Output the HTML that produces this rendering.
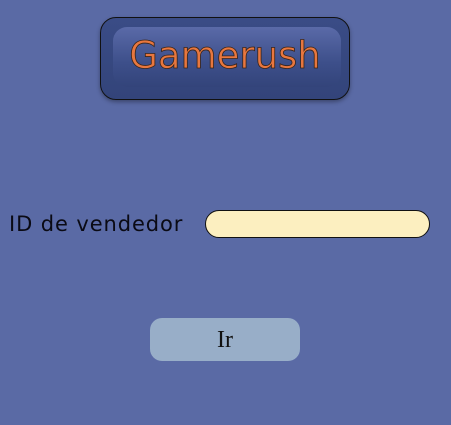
<!DOCTYPE html>
<html><head><meta charset="utf-8"><style>
body{margin:0;width:451px;height:425px;background:#5a6aa5;position:relative;overflow:hidden;font-family:"Liberation Sans",sans-serif}
.logo{position:absolute;left:100px;top:17px;width:248px;height:81px;border:1px solid #111;border-radius:16px;background:linear-gradient(#3a4c86,#33447a);box-shadow:0 2px 4px rgba(0,0,0,.35);overflow:hidden}
.logo .in{position:absolute;left:12px;top:9px;right:8px;height:60px;border-radius:14px;background:linear-gradient(#5a6aa8,#3d4f8a 60%,#33447a)}
.logo span{position:absolute;left:0;right:0;top:16px;text-align:center;font-size:37px;color:#e8773f;-webkit-text-stroke:0.8px #3a2418;font-family:"DejaVu Sans","Liberation Sans",sans-serif}
.lbl{position:absolute;left:9px;top:212px;font-size:21px;color:#0a0a14;font-family:"DejaVu Sans",sans-serif;letter-spacing:0.9px}
.inp{position:absolute;left:205px;top:210px;width:223px;height:26px;background:#fcefc0;border:1px solid #111;border-radius:14px}
.btn{position:absolute;left:150px;top:318px;width:150px;height:43px;background:#98aec8;border-radius:12px;text-align:center;line-height:45px;font-family:"Liberation Serif",serif;font-size:24px;color:#111}
</style></head><body>
<div class="logo"><div class="in"></div><span>Gamerush</span></div>
<div class="lbl">ID de vendedor</div>
<div class="inp"></div>
<div class="btn">Ir</div>
</body></html>
